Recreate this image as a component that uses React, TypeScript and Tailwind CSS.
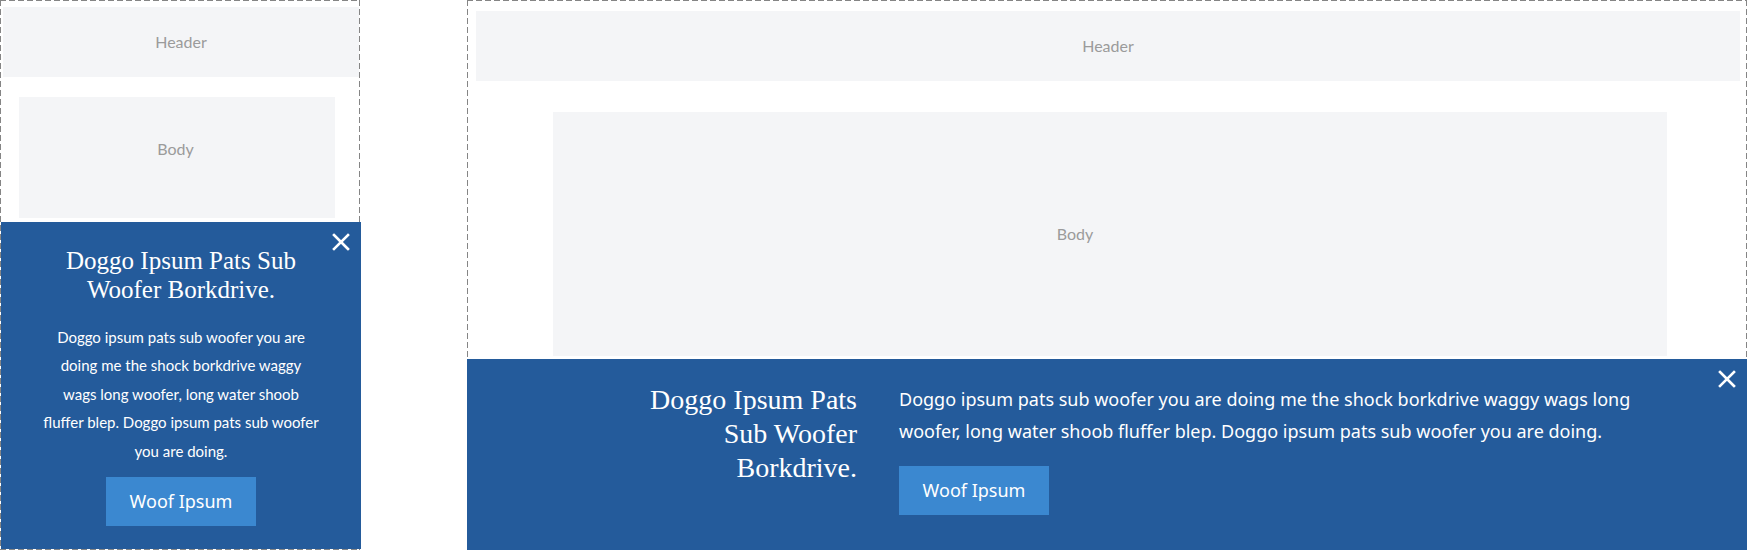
const serif = { fontFamily: '"Liberation Serif", "Times New Roman", serif' };

// dashed outline with longer dashes than the browser's 1px dashed border
const dashedFrame =
  'p-px [background-image:linear-gradient(90deg,#858585_6px,transparent_6px),linear-gradient(90deg,#858585_6px,transparent_6px),linear-gradient(#858585_6px,transparent_6px),linear-gradient(#858585_6px,transparent_6px)] [background-size:9px_1px,9px_1px,1px_9px,1px_9px] [background-position:0_0,0_100%,0_0,100%_0] [background-repeat:repeat-x,repeat-x,repeat-y,repeat-y]';

function CloseButton() {
  return (
    <button className="absolute top-[11px] right-[11px] text-white" aria-label="Close">
      <svg width="18" height="18" viewBox="0 0 18 18" fill="none" stroke="currentColor" strokeWidth="2.6" strokeLinecap="square">
        <path d="M2 2 L16 16 M16 2 L2 16" />
      </svg>
    </button>
  );
}

function MobileFrame() {
  return (
    <div className={`relative w-[360px] h-[550px] shrink-0 bg-white font-['Lato',sans-serif] ${dashedFrame}`}>
      <div className="ml-[2px] mt-[6px] h-[70px] bg-[#f4f5f7] flex items-center justify-center text-[16px] text-[#9b9b9b]">
        Header
      </div>
      <div className="ml-[18px] mt-[20px] w-[316px] h-[121px] bg-[#f4f5f7] pt-[40px] pr-[3px] text-center text-[16px] text-[#9b9b9b]">
        Body
      </div>

      <div className="absolute left-px right-[-1px] bottom-px bg-[#245b9b] px-[30px] pt-[24px] pb-[23px] text-center text-white">
        <CloseButton />
        <h2 className="px-[10px] text-[25px] leading-[29px]" style={serif}>
          Doggo Ipsum Pats Sub Woofer Borkdrive.
        </h2>
        <p className="mt-[19px] text-[15px] leading-[28.5px] font-['Lato',sans-serif]">
          Doggo ipsum pats sub woofer you are
          <br />
          doing me the shock borkdrive waggy
          <br />
          wags long woofer, long water shoob
          <br />
          fluffer blep. Doggo ipsum pats sub woofer
          <br />
          you are doing.
        </p>
        <button className="mt-[12px] w-[150px] h-[49px] bg-[#3b88d0] text-[18px] font-['Noto_Sans',sans-serif]">
          Woof Ipsum
        </button>
      </div>
    </div>
  );
}

function DesktopFrame() {
  return (
    <div className={`relative w-[1280px] h-[550px] shrink-0 bg-white font-['Lato',sans-serif] ${dashedFrame}`}>
      <div className="ml-[8px] mr-[6px] mt-[10px] h-[70px] bg-[#f4f5f7] flex items-center justify-center text-[16px] text-[#9b9b9b]">
        Header
      </div>
      <div className="ml-[85px] mt-[31px] w-[1114px] h-[244px] bg-[#f4f5f7] flex items-center justify-center pr-[70px] text-[16px] text-[#9b9b9b]">
        Body
      </div>

      <div className="absolute left-0 right-0 bottom-0 h-[191px] bg-[#245b9b] pl-[160px] pt-[24px] flex gap-[42px] text-white">
        <CloseButton />
        <h2 className="w-[230px] text-right text-[28px] leading-[34px]" style={serif}>
          Doggo Ipsum Pats Sub Woofer Borkdrive.
        </h2>
        <div className="w-[760px] font-['Noto_Sans',sans-serif]">
          <p className="text-[18px] leading-[32.4px]">
            Doggo ipsum pats sub woofer you are doing me the shock borkdrive waggy wags long woofer, long water shoob fluffer blep. Doggo ipsum pats sub woofer you are doing.
          </p>
          <button className="mt-[18px] w-[150px] h-[49px] bg-[#3b88d0] text-[18px]">
            Woof Ipsum
          </button>
        </div>
      </div>
    </div>
  );
}

export default function App() {
  return (
    <div className="w-[1747px] h-[550px] bg-white flex gap-[107px] overflow-hidden">
      <MobileFrame />
      <DesktopFrame />
    </div>
  );
}
